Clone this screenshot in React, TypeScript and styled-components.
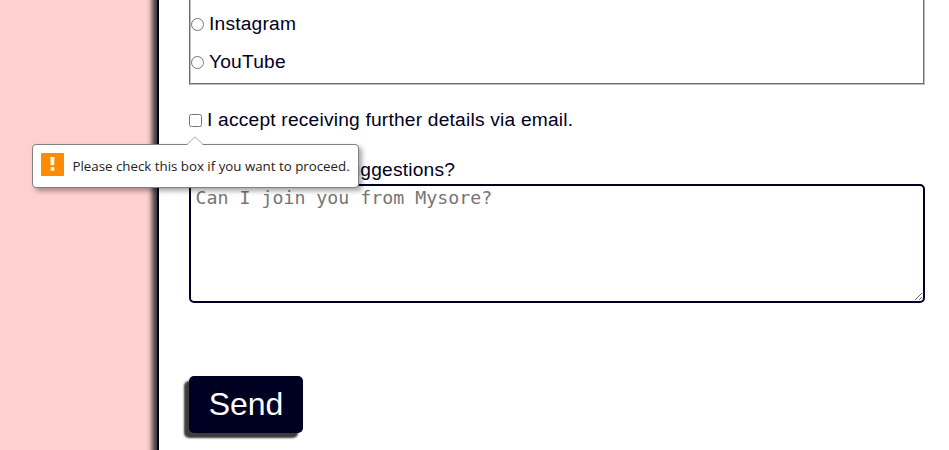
import React from "react";
import styled, { createGlobalStyle } from "styled-components";

const Global = createGlobalStyle`
  * { box-sizing: border-box; }
  html, body { margin: 0; height: 450px; overflow: hidden; }
  body {
    background: #ffd0d0;
    color: #000022;
    font-family: "Liberation Sans", Arial, sans-serif;
    font-size: 19.2px;
    letter-spacing: 0.2px;
  }
`;

const Page = styled.main`
  height: 450px;
  padding-left: 157px;
  overflow: hidden;
`;

const Form = styled.form`
  height: 570px;
  margin-top: -60px;
  padding: 60px 24px 0 30px;
  background: #fff;
  border-left: 2px solid #000022;
  box-shadow: -5px 5px 5px #3c3c3c;
`;

const Group = styled.fieldset`
  height: 145px;
  margin: -60px 0 0;
  padding: 63px 0 0;
  border: 2px groove #c0c0c0;
`;

const Option = styled.label`
  display: flex;
  align-items: center;
  height: 38px;
`;

const Radio = styled.input.attrs({ type: "radio" })`
  width: 13px;
  height: 13px;
  margin: 1px 5px 0 0;
`;

const Consent = styled.label`
  position: relative;
  display: flex;
  align-items: center;
  height: 38px;
  margin-top: 16px;
`;

const Check = styled.input.attrs({ type: "checkbox" })`
  width: 13px;
  height: 13px;
  margin: 1px 5px 0 0;
`;

const Bubble = styled.div`
  position: absolute;
  left: -157px;
  top: 43px;
  width: 327px;
  height: 44px;
  display: flex;
  align-items: center;
  padding: 0 8px;
  background: #fff;
  border: 1px solid #808080;
  border-radius: 4px;
  box-shadow: 3px 3px 5px rgba(0, 0, 0, 0.35);
  color: #222;
  font: 13.3px "Open Sans", "Noto Sans", sans-serif;
  letter-spacing: 0;
  white-space: nowrap;
`;

const Arrow = styled.svg`
  position: absolute;
  left: 153px;
  top: -9px;
`;

const Warning = styled.svg`
  flex: none;
  margin: -4px 8.5px 0 0;
`;

const QuestionLabel = styled.label`
  display: block;
  height: 24px;
  margin: 19px 0 0 -1px;
  line-height: 24px;
`;

const Comments = styled.textarea`
  display: block;
  width: 100%;
  height: 119px;
  margin-top: 2px;
  padding: 0 4.5px;
  border: 2px solid #000022;
  border-radius: 5px;
  background: #fff;
  font: 18.25px/23px "DejaVu Sans Mono", monospace;
  &::placeholder { color: #757575; }
`;

const Send = styled.button`
  display: block;
  width: 114px;
  height: 57px;
  margin-top: 73px;
  padding: 0;
  border: 0;
  border-radius: 5px;
  background: #000022;
  color: #fff;
  font: 32px "Liberation Sans", Arial, sans-serif;
  box-shadow: -5px 5px 2px #3c3c3c;
`;

export default function App() {
  return (
    <>
      <Global />
      <Page>
        <Form>
          <Group>
            <Option><Radio name="source" />Instagram</Option>
            <Option><Radio name="source" />YouTube</Option>
          </Group>
          <Consent>
            <Check />
            I accept receiving further details via email.
            <Bubble role="alert">
              <Arrow width="18" height="10" viewBox="0 0 18 10">
                <path d="M1 9 9 1 17 9V10H1Z" fill="#fff" />
                <path d="M1 8.5 9 .8 17 8.5" fill="none" stroke="#aaa" />
              </Arrow>
              <Warning width="23" height="23" viewBox="0 0 23 23">
                <rect width="23" height="23" rx="1" fill="#ff8c00" />
                <path d="M9.3 4h4.2l-.4 8.2H9.7ZM9.7 14.3h3.6v3.4H9.7Z" fill="#fff" />
              </Warning>
              Please check this box if you want to proceed.
            </Bubble>
          </Consent>
          <QuestionLabel htmlFor="comments">Any questions or suggestions?</QuestionLabel>
          <Comments id="comments" placeholder="Can I join you from Mysore?" />
          <Send type="button">Send</Send>
        </Form>
      </Page>
    </>
  );
}
